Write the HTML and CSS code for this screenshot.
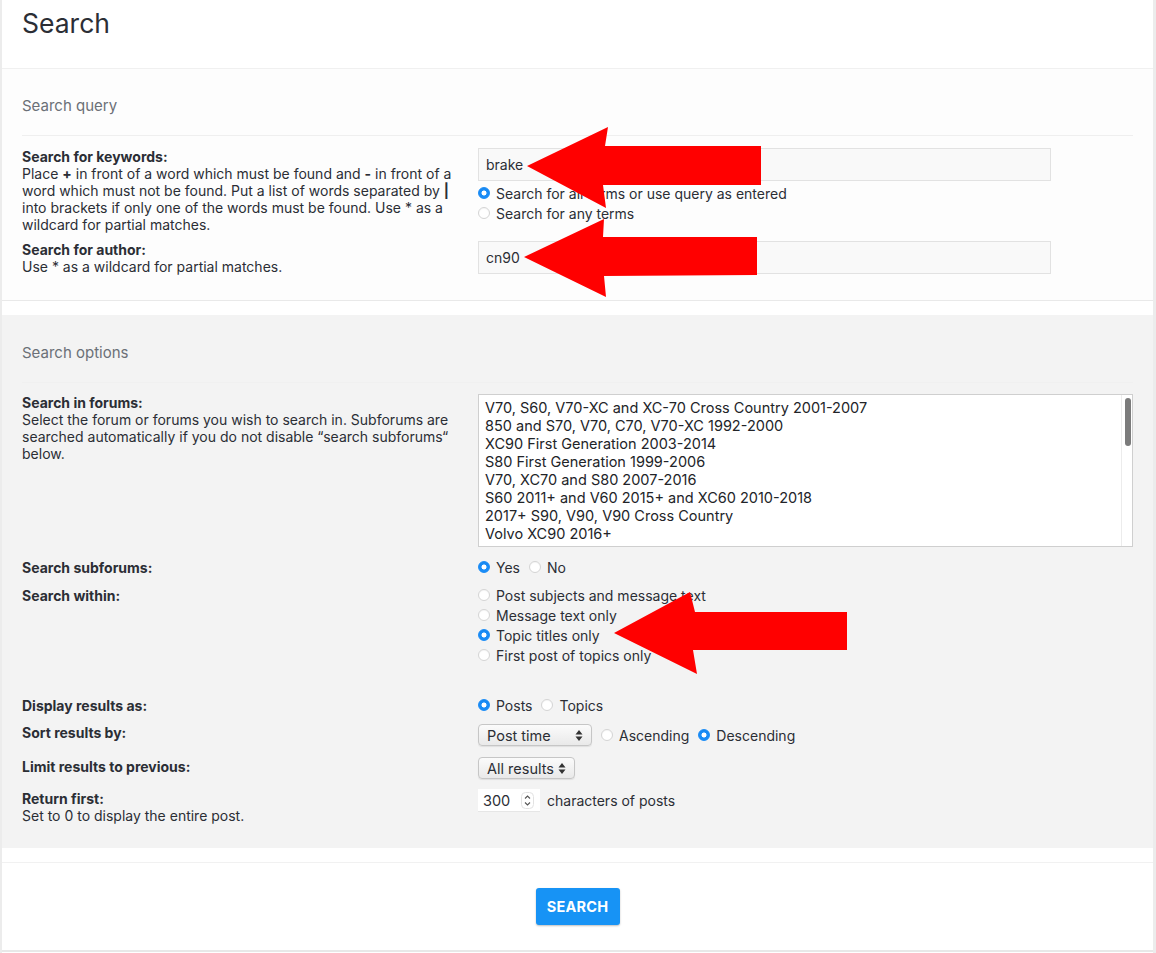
FILE: index.html
```html
<!DOCTYPE html>
<html lang="en">
<head>
<meta charset="utf-8">
<title>Search</title>
<link rel="stylesheet" href="styles.css">
</head>
<body>
<div class="page">
  <h1 class="title">Search</h1>

  <section class="panel panel-query">
    <h3 class="legend">Search query</h3>
    <hr class="rule">
    <div class="row">
      <div class="label"><strong>Search for keywords:</strong><br>Place <strong>+</strong> in front of a word which must be found and <strong>-</strong> in front of a word which must not be found. Put a list of words separated by <strong>|</strong> into brackets if only one of the words must be found. Use * as a wildcard for partial matches.</div>
      <div class="ctrl">
        <input class="textbox" type="text" value="brake">
        <div class="radios">
          <label class="opt"><input type="radio" name="terms" checked>Search for all terms or use query as entered</label>
          <label class="opt"><input type="radio" name="terms">Search for any terms</label>
        </div>
      </div>
    </div>
    <div class="row row-author">
      <div class="label"><strong>Search for author:</strong><br>Use * as a wildcard for partial matches.</div>
      <div class="ctrl">
        <input class="textbox" type="text" value="cn90">
      </div>
    </div>
  </section>

  <section class="panel panel-options">
    <h3 class="legend">Search options</h3>
    <hr class="rule rule-soft">
    <div class="row">
      <div class="label"><strong>Search in forums:</strong><br>Select the forum or forums you wish to search in. Subforums are searched automatically if you do not disable “search subforums“ below.</div>
      <div class="ctrl">
        <div class="listbox">
          <ul class="list">
            <li>V70, S60, V70-XC and XC-70 Cross Country 2001-2007</li>
            <li>850 and S70, V70, C70, V70-XC 1992-2000</li>
            <li>XC90 First Generation 2003-2014</li>
            <li>S80 First Generation 1999-2006</li>
            <li>V70, XC70 and S80 2007-2016</li>
            <li>S60 2011+ and V60 2015+ and XC60 2010-2018</li>
            <li>2017+ S90, V90, V90 Cross Country</li>
            <li>Volvo XC90 2016+</li>
          </ul>
          <div class="track"><div class="thumb"></div></div>
        </div>
      </div>
    </div>
    <div class="row row-sub">
      <div class="label pad"><strong>Search subforums:</strong></div>
      <div class="ctrl inline">
        <label class="opt"><input type="radio" name="sub" checked>Yes</label>
        <label class="opt"><input type="radio" name="sub">No</label>
      </div>
    </div>
    <div class="row row-within">
      <div class="label pad"><strong>Search within:</strong></div>
      <div class="ctrl">
        <label class="opt"><input type="radio" name="within">Post subjects and message text</label>
        <label class="opt"><input type="radio" name="within">Message text only</label>
        <label class="opt"><input type="radio" name="within" checked>Topic titles only</label>
        <label class="opt"><input type="radio" name="within">First post of topics only</label>
      </div>
    </div>
    <div class="row row-display">
      <div class="label pad"><strong>Display results as:</strong></div>
      <div class="ctrl inline">
        <label class="opt"><input type="radio" name="disp" checked>Posts</label>
        <label class="opt"><input type="radio" name="disp">Topics</label>
      </div>
    </div>
    <div class="row row-sort">
      <div class="label"><strong>Sort results by:</strong></div>
      <div class="ctrl inline">
        <div class="select select-sort"><span>Post time</span><svg class="updown" width="8" height="13" viewBox="0 0 8 13"><path d="M4 1 L7.5 5.5 H0.5 Z M4 12 L7.5 7.5 H0.5 Z" fill="#333"/></svg></div>
        <label class="opt"><input type="radio" name="dir">Ascending</label>
        <label class="opt"><input type="radio" name="dir" checked>Descending</label>
      </div>
    </div>
    <div class="row row-limit">
      <div class="label pad1"><strong>Limit results to previous:</strong></div>
      <div class="ctrl inline">
        <div class="select select-limit"><span>All results</span><svg class="updown" width="8" height="13" viewBox="0 0 8 13"><path d="M4 1 L7.5 5.5 H0.5 Z M4 12 L7.5 7.5 H0.5 Z" fill="#333"/></svg></div>
      </div>
    </div>
    <div class="row row-return">
      <div class="label pad1"><strong>Return first:</strong><br>Set to 0 to display the entire post.</div>
      <div class="ctrl inline">
        <div class="number"><span>300</span><svg class="spin" width="13" height="17" viewBox="0 0 13 17"><rect x="0.5" y="0.5" width="12" height="16" rx="4" fill="#fff" stroke="#e2e2e2"/><path d="M4 6.5 L6.5 4 L9 6.5 M4 10.5 L6.5 13 L9 10.5" fill="none" stroke="#555" stroke-width="1.1"/></svg></div>
        <span class="after">characters of posts</span>
      </div>
    </div>
  </section>

  <section class="panel panel-submit">
    <button class="btn" type="button">SEARCH</button>
  </section>
</div>

<svg class="marks" width="1156" height="953" viewBox="0 0 1156 953">
  <polygon points="527,166 608,127 605,146 761,146 761,185 603,185 606,208" fill="#ff0000"/>
  <polygon points="524,257 604,219 603,237 757,237 757,275 604,276 606,297" fill="#ff0000"/>
  <polygon points="614,633 690,592 695,612 847,612 847,650 693,650 697,674" fill="#ff0000"/>
</svg>
</body>
</html>
```

FILE: styles.css
```css
* { box-sizing: border-box; }

html, body {
  margin: 0;
  padding: 0;
}

body {
  background: #ececec;
  font-family: "Inter", "Liberation Sans", sans-serif;
  font-size: 14px;
  color: #2b2e35;
  position: relative;
  min-height: 953px;
}

.page {
  margin-left: 2px;
  width: 1151px;
  min-height: 953px;
  background: #ffffff;
  padding-bottom: 1px;
}

.title {
  margin: 0 0 27px;
  padding: 5px 0 0 20px;
  font-size: 26.5px;
  line-height: 36px;
  font-weight: 400;
  color: #2b2e35;
}

.panel {
  padding-left: 20px;
  padding-right: 20px;
}

.panel-query {
  background: #fdfdfd;
  border-top: 1px solid #f0f0f0;
  border-bottom: 1px solid #e9e9e9;
  padding-top: 27px;
  padding-bottom: 25px;
}

.panel-options {
  background: #f3f3f3;
  margin-top: 14px;
  padding-top: 28px;
  padding-bottom: 24px;
}

.panel-submit {
  background: #ffffff;
  margin-top: 14px;
  border-top: 1px solid #f1f1f1;
  border-bottom: 2px solid #e8e8e8;
  padding-top: 25px;
  padding-bottom: 25px;
  text-align: center;
}

.legend {
  margin: 0;
  font-size: 15px;
  line-height: 20px;
  font-weight: 400;
  color: #6b7077;
}

.rule {
  margin: 19px 0 12px;
  border: 0;
  border-top: 1px solid #efefef;
  height: 0;
}

.rule-soft {
  border-top-color: #f0f0f0;
  margin-bottom: 11px;
}

.row {
  display: flex;
  align-items: flex-start;
}

.label {
  width: 444px;
  margin-right: 12px;
  flex: none;
  font-size: 14px;
  line-height: 17px;
  color: #2b2e35;
}

.label strong { font-weight: 700; }

.label.pad { padding-top: 1.5px; }
.label.pad1 { padding-top: 1px; }

.ctrl {
  flex: 1;
  min-width: 0;
}

.ctrl.inline {
  display: flex;
  align-items: center;
}

.textbox {
  display: block;
  width: 573px;
  height: 33px;
  margin: 0;
  padding: 0 7px;
  border: 1px solid #e2e2e2;
  border-radius: 0;
  background: #f9f9f9;
  font-family: inherit;
  font-size: 14px;
  color: #2b2e35;
  outline: none;
}

.radios { margin-top: 2px; }

.opt {
  display: flex;
  align-items: center;
  height: 20px;
  font-size: 14px;
  color: #2b2e35;
  white-space: nowrap;
}

.inline .opt { margin-right: 9px; }

.opt input {
  -webkit-appearance: none;
  appearance: none;
  width: 12px;
  height: 12px;
  margin: 0 6px 0 0;
  border-radius: 50%;
  border: 1px solid #d4d4d4;
  background: #ffffff;
  flex: none;
  box-shadow: inset 0 1px 1px rgba(0,0,0,0.04);
}

.opt input:checked {
  border-color: #1a8cf6;
  background: radial-gradient(circle, #ffffff 0 2.2px, #1a8cf6 2.8px);
}

.row-author { margin-top: 8px; }
.row-sub { margin-top: 10px; }
.row-within { margin-top: 8px; }
.row-display { margin-top: 30px; }
.row-sort { margin-top: 9px; }
.row-limit { margin-top: 11px; }
.row-return { margin-top: 10px; }

.listbox {
  display: flex;
  height: 153px;
  border: 1px solid #cfcfcf;
  background: #ffffff;
}

.list {
  flex: 1;
  list-style: none;
  margin: 0;
  padding: 4px 0 0 6px;
  font-size: 14.5px;
  line-height: 18px;
  color: #222428;
}

.track {
  width: 11px;
  flex: none;
  border-left: 1px solid #ececec;
  padding: 3px 2px 0 3px;
}

.thumb {
  width: 6px;
  height: 48px;
  border-radius: 3px;
  background: #7b7b7b;
}

.select {
  display: flex;
  align-items: center;
  justify-content: space-between;
  height: 22px;
  padding: 0 8px 0 8px;
  border: 1px solid #c6c6c6;
  border-radius: 4px;
  background: linear-gradient(#fbfbfb, #e9e9e9);
  box-shadow: 0 1px 1px rgba(0,0,0,0.08);
  font-size: 14.5px;
  color: #2b2e35;
  margin-right: 9px;
}

.select-sort { width: 114px; }
.select-limit { width: 97px; }

.updown { flex: none; }

.number {
  display: flex;
  align-items: center;
  justify-content: space-between;
  width: 62px;
  height: 23px;
  padding: 0 6px 0 5px;
  background: #ffffff;
  border-bottom: 1px solid #e6e6e6;
  font-size: 14.5px;
  color: #2b2e35;
  margin-right: 7px;
}

.after {
  font-size: 14px;
  color: #2b2e35;
}

.btn {
  width: 84px;
  height: 37px;
  border: 0;
  border-radius: 3px;
  background: #1793f5;
  color: #ffffff;
  font-family: inherit;
  font-size: 14.5px;
  font-weight: 700;
  letter-spacing: 0.2px;
  box-shadow: 0 1px 2px rgba(0,0,0,0.25);
  cursor: pointer;
}

.marks {
  position: absolute;
  left: 0;
  top: 0;
  pointer-events: none;
}
```
